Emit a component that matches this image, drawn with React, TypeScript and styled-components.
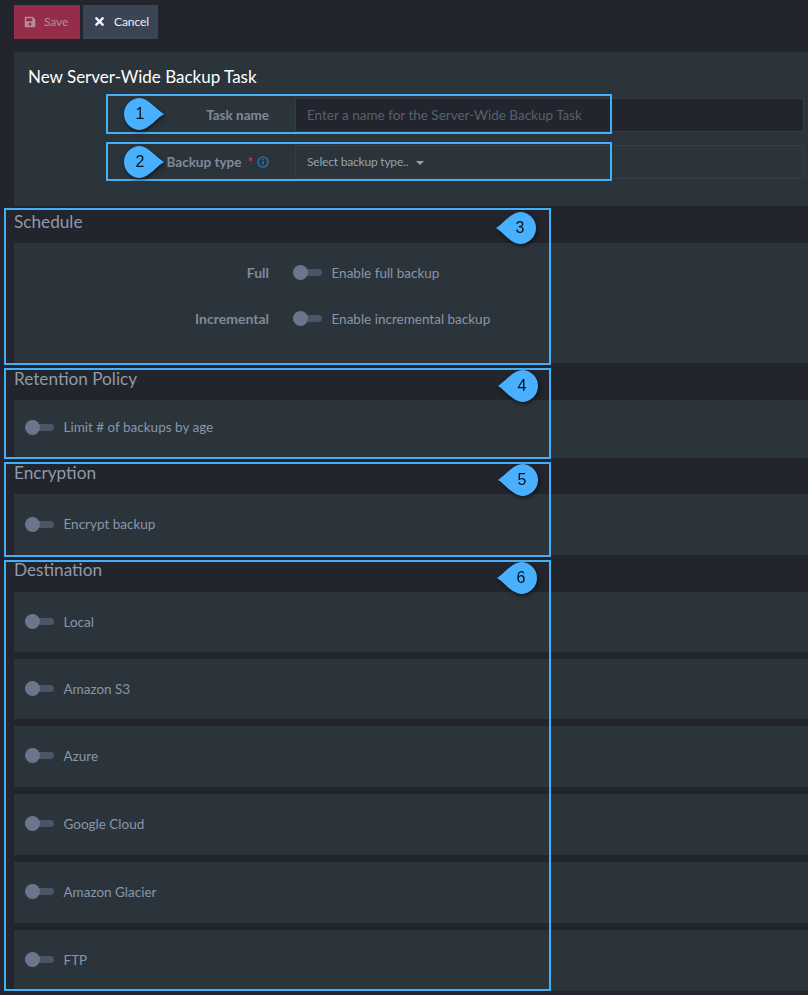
import React from "react";
import styled, { createGlobalStyle } from "styled-components";
import { FaSave, FaTimes } from "react-icons/fa";

const Global = createGlobalStyle`
  html, body { margin: 0; padding: 0; background: #22252d; }
  body { font-family: Lato, "Noto Sans", sans-serif; overflow: hidden; }
  * { box-sizing: border-box; }
`;

const Page = styled.div`
  position: relative;
  width: 808px;
  height: 995px;
  overflow: hidden;
  padding-left: 14px;
  background: #22252d;
`;

const Toolbar = styled.div`
  display: flex;
  gap: 3px;
  padding-top: 5px;
  height: 52px;
`;

const Button = styled.div<{ $save?: boolean }>`
  display: flex;
  align-items: center;
  gap: 8px;
  height: 34px;
  width: ${(p) => (p.$save ? "66px" : "75px")};
  font-size: 12px;
  padding-left: 10px;
  padding-bottom: 1px;
  background: ${(p) => (p.$save ? "#952d4a" : "#3a4452")};
  color: ${(p) => (p.$save ? "#b98a98" : "#f0f2f5")};
  letter-spacing: -0.1px;
`;

const HeaderPanel = styled.div`
  height: 154px;
  background: #2c343b;
  padding: 14px 4px 0 14px;
`;

const Title = styled.h3`
  margin: 0;
  height: 22px;
  font-size: 17px;
  line-height: 21px;
  font-weight: 400;
  color: #ffffff;
`;

const FormRow = styled.div`
  display: grid;
  grid-template-columns: 267px 1fr;
  align-items: center;
  height: 34px;
  margin-top: 10px;
  & + & { margin-top: 13px; }
`;

const FormLabel = styled.div`
  display: flex;
  justify-content: flex-end;
  align-items: center;
  gap: 4px;
  padding-right: 26px;
  font-size: 13.5px;
  font-weight: 700;
  color: #7e8a99;
`;

const Star = styled.span`
  color: #c9304f;
  margin-left: 2px;
  font-size: 13px;
`;

const Input = styled.div`
  height: 34px;
  display: flex;
  align-items: center;
  padding-left: 11px;
  background: #22252d;
  border: 1px solid #343d47;
  color: #56616f;
  font-size: 13.5px;
`;

const Select = styled(Input)`
  background: #2c343b;
  color: #98a2ad;
  font-size: 12px;
  gap: 8px;
  letter-spacing: -0.2px;
  padding-bottom: 1px;
`;

const Caret = styled.span`
  width: 0;
  height: 0;
  margin-top: 2px;
  border-left: 4px solid transparent;
  border-right: 4px solid transparent;
  border-top: 4px solid #98a2ad;
`;

const SectionTitle = styled.h3<{ $h: number; $line?: number }>`
  margin: 0;
  height: ${(p) => p.$h}px;
  font-size: 17.2px;
  line-height: ${(p) => p.$line ?? 31}px;
  font-weight: 400;
  color: #8f9aa8;
`;

const Panel = styled.div<{ $h: number; $gap?: number }>`
  height: ${(p) => p.$h}px;
  margin-bottom: ${(p) => p.$gap ?? 0}px;
  background: #2c343b;
  display: flex;
  flex-direction: column;
`;

const ToggleRow = styled.div<{ $h?: number }>`
  display: flex;
  align-items: center;
  height: ${(p) => p.$h ?? 46}px;
`;

const ScheduleLabel = styled.div`
  width: 255px;
  text-align: right;
  font-size: 14px;
  font-weight: 700;
  color: #7e8a99;
  margin-right: 24px;
`;

const Switch = styled.span`
  position: relative;
  flex: none;
  width: 29px;
  height: 7px;
  border-radius: 4px;
  background: #4a5567;
  &::before {
    content: "";
    position: absolute;
    left: 0;
    top: -4px;
    width: 15px;
    height: 15px;
    border-radius: 50%;
    background: #6b758b;
  }
`;

const SwitchText = styled.span`
  margin-left: 9.5px;
  font-size: 13.5px;
  color: #8796a8;
`;

const FlatRow = styled(ToggleRow)`
  padding-left: 11px;
`;

const Highlight = styled.div<{ $x: number; $y: number; $w: number; $h: number }>`
  position: absolute;
  left: ${(p) => p.$x}px;
  top: ${(p) => p.$y}px;
  width: ${(p) => p.$w}px;
  height: ${(p) => p.$h}px;
  border: 2px solid #45aef8;
  pointer-events: none;
`;

const Callout = styled.div<{ $x: number; $y: number }>`
  position: absolute;
  left: ${(p) => p.$x}px;
  top: ${(p) => p.$y}px;
  width: 46px;
  height: 36px;
  filter: drop-shadow(1px 2px 2px rgba(0, 0, 0, 0.55));
`;

const CalloutNumber = styled.span<{ $left: boolean }>`
  position: absolute;
  top: 0;
  ${(p) => (p.$left ? "right: 0;" : "left: 0;")}
  width: 32px;
  height: 32px;
  line-height: 32px;
  margin-top: 2px;
  text-align: center;
  font-family: "Liberation Sans", Arial, sans-serif;
  font-size: 16px;
  color: #05121c;
`;

const Tear: React.FC<{ n: number; left?: boolean; x: number; y: number }> = ({ n, left, x, y }) => (
  <Callout $x={x} $y={y}>
    <svg width="46" height="36" viewBox="0 0 46 36">
      <path
        d={
          left
            ? "M6 18 C13 14 20 3 30 2 A16 16 0 0 1 30 34 C20 33 13 22 6 18 Z"
            : "M40 18 C33 14 25 3 16 2 A16 16 0 0 0 16 34 C25 33 33 22 40 18 Z"
        }
        fill="#49b0ff"
      />
    </svg>
    <CalloutNumber $left={!!left}>{n}</CalloutNumber>
  </Callout>
);

const InfoIcon = () => (
  <svg width="12" height="12" viewBox="0 0 12 12" fill="none">
    <circle cx="6" cy="6" r="5" stroke="#2f7fdc" strokeWidth="1.1" />
    <rect x="5.4" y="5" width="1.2" height="3.6" fill="#2f7fdc" />
    <rect x="5.4" y="3" width="1.2" height="1.2" fill="#2f7fdc" />
  </svg>
);

const destinations = ["Local", "Amazon S3", "Azure", "Google Cloud", "Amazon Glacier", "FTP"];
const destinationGaps = [7, 7, 7, 7, 7, 0];
const destinationHeights = [60, 60, 61, 61, 61, 61];

export default function App() {
  return (
    <>
      <Global />
      <Page>
        <Toolbar>
          <Button $save>
            <FaSave size={12} />
            Save
          </Button>
          <Button>
            <FaTimes size={13} />
            Cancel
          </Button>
        </Toolbar>

        <HeaderPanel>
          <Title>New Server-Wide Backup Task</Title>
          <FormRow>
            <FormLabel>Task name</FormLabel>
            <Input>Enter a name for the Server-Wide Backup Task</Input>
          </FormRow>
          <FormRow>
            <FormLabel>
              Backup type <Star>*</Star> <InfoIcon />
            </FormLabel>
            <Select>
              Select backup type..
              <Caret />
            </Select>
          </FormRow>
        </HeaderPanel>

        <SectionTitle $h={37}>Schedule</SectionTitle>
        <Panel $h={120}>
          <ToggleRow $h={59}>
            <ScheduleLabel>Full</ScheduleLabel>
            <Switch />
            <SwitchText>Enable full backup</SwitchText>
          </ToggleRow>
          <ToggleRow $h={33}>
            <ScheduleLabel>Incremental</ScheduleLabel>
            <Switch />
            <SwitchText>Enable incremental backup</SwitchText>
          </ToggleRow>
        </Panel>

        <SectionTitle $h={37}>Retention Policy</SectionTitle>
        <Panel $h={58}>
          <FlatRow $h={54}>
            <Switch />
            <SwitchText>Limit # of backups by age</SwitchText>
          </FlatRow>
        </Panel>

        <SectionTitle $h={36} $line={29}>Encryption</SectionTitle>
        <Panel $h={61}>
          <FlatRow $h={60}>
            <Switch />
            <SwitchText>Encrypt backup</SwitchText>
          </FlatRow>
        </Panel>

        <SectionTitle $h={37} $line={29}>Destination</SectionTitle>
        {destinations.map((d, i) => (
          <Panel key={d} $h={destinationHeights[i]} $gap={destinationGaps[i]}>
            <FlatRow $h={59}>
              <Switch />
              <SwitchText>{d}</SwitchText>
            </FlatRow>
          </Panel>
        ))}

        <Highlight $x={106} $y={94} $w={506} $h={40} />
        <Highlight $x={106} $y={142} $w={506} $h={39} />
        <Highlight $x={4} $y={208} $w={547} $h={157} />
        <Highlight $x={4} $y={368} $w={547} $h={91} />
        <Highlight $x={4} $y={462} $w={547} $h={95} />
        <Highlight $x={4} $y={560} $w={547} $h={431} />

        <Tear n={1} x={124} y={96} />
        <Tear n={2} x={124} y={144} />
        <Tear n={3} left x={490} y={210} />
        <Tear n={4} left x={492} y={368} />
        <Tear n={5} left x={492} y={462} />
        <Tear n={6} left x={491} y={560} />
      </Page>
    </>
  );
}
